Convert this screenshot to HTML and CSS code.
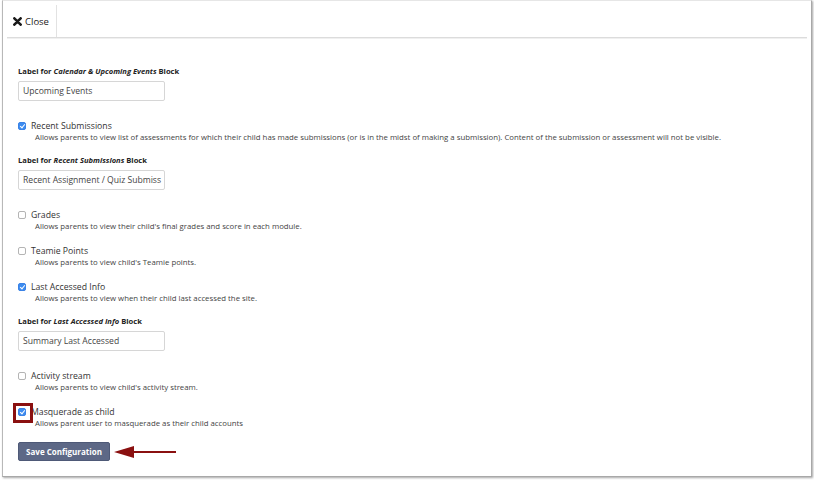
FILE: index.html
```html
<!DOCTYPE html>
<html>
<head>
<meta charset="utf-8">
<link rel="stylesheet" href="styles.css">
</head>
<body>
<div class="frame">
  <div class="panel">
    <div class="header">
      <div class="tab">
        <svg class="x-icon" width="9" height="9" viewBox="0 0 10 10"><path d="M1.5 1.5 L8.5 8.5 M8.5 1.5 L1.5 8.5" stroke="#1a1a1a" stroke-width="2.9" stroke-linecap="round"/></svg>
        <span>Close</span>
      </div>
    </div>
    <div class="content">
      <div class="field field-input">
        <div class="label">Label for <em>Calendar &amp; Upcoming Events</em> Block</div>
        <div class="input">Upcoming Events</div>
      </div>

      <div class="option">
        <div class="opt-title"><span class="cb checked"></span>Recent Submissions</div>
        <div class="desc">Allows parents to view list of assessments for which their child has made submissions (or is in the midst of making a submission). Content of the submission or assessment will not be visible.</div>
      </div>

      <div class="field field-input">
        <div class="label">Label for <em>Recent Submissions</em> Block</div>
        <div class="input">Recent Assignment / Quiz Submiss</div>
      </div>

      <div class="option">
        <div class="opt-title"><span class="cb"></span>Grades</div>
        <div class="desc">Allows parents to view their child's final grades and score in each module.</div>
      </div>

      <div class="option">
        <div class="opt-title"><span class="cb"></span>Teamie Points</div>
        <div class="desc">Allows parents to view child's Teamie points.</div>
      </div>

      <div class="option">
        <div class="opt-title"><span class="cb checked"></span>Last Accessed Info</div>
        <div class="desc">Allows parents to view when their child last accessed the site.</div>
      </div>

      <div class="field field-input">
        <div class="label">Label for <em>Last Accessed Info</em> Block</div>
        <div class="input">Summary Last Accessed</div>
      </div>

      <div class="option">
        <div class="opt-title"><span class="cb"></span>Activity stream</div>
        <div class="desc">Allows parents to view child's activity stream.</div>
      </div>

      <div class="option">
        <div class="opt-title"><span class="cb checked"><span class="highlight"></span></span>Masquerade as child</div>
        <div class="desc">Allows parent user to masquerade as their child accounts</div>
      </div>

      <div class="actions">
        <button class="btn">Save Configuration</button>
        <svg class="arrow" width="64" height="16" viewBox="0 0 64 16"><path d="M62 7 L20 7 L20 2 L0 8 L20 14 L20 9 L62 9 Z" fill="#8a1010"/></svg>
      </div>
    </div>
  </div>
</div>
</body>
</html>
```

FILE: styles.css
```css
* { box-sizing: border-box; }
html, body { margin: 0; padding: 0; background: #fff; }
body {
  font-family: "Open Sans", "Liberation Sans", sans-serif;
  color: #333;
  width: 814px;
  height: 481px;
  overflow: hidden;
}
.frame {
  margin-left: 2px;
  width: 810px;
  height: 477px;
  border-top: 1px solid #e6e6e6;
  border-left: 1px solid #b8b8b8;
  border-right: 1px solid #a8a8a8;
  border-bottom: 1px solid #a8a8a8;
  box-shadow: 1px 1px 2px rgba(0,0,0,0.35);
  padding: 0 4px 0 4px;
}
.panel { height: 100%; }
.header {
  height: 37px;
  border-bottom: 1px solid #dcdcdc;
  box-shadow: 0 1px 0 #f0f0f0;
  display: flex;
  align-items: flex-end;
}
.tab {
  height: 32px;
  width: 50px;
  border-right: 1px solid #e2e2e2;
  display: flex;
  align-items: center;
  padding-left: 6px;
  gap: 3px;
  font-size: 9.5px;
  color: #222;
}
.x-icon { display: block; }
.content {
  padding: 28px 0 0 11px;
  font-size: 7.8px;
}
.field-input { margin-bottom: 19px; }
.option + .field-input { margin-top: -1px; }
.label {
  font-weight: 700;
  font-size: 7.6px;
  line-height: 11px;
  color: #222;
  margin-bottom: 4px;
}
.label em { font-style: italic; }
.input {
  width: 147px;
  height: 20px;
  border: 1px solid #d6d6d6;
  border-radius: 2px;
  font-size: 8.6px;
  line-height: 18px;
  padding-left: 4px;
  color: #444;
  overflow: hidden;
  white-space: nowrap;
}
.option { margin-bottom: 13px; }
.opt-title {
  display: flex;
  align-items: center;
  font-size: 8.7px;
  line-height: 12px;
  color: #333;
}
.cb {
  position: relative;
  width: 8px;
  height: 8px;
  border: 1px solid #b4b4b4;
  border-radius: 2px;
  background: #fff;
  margin-right: 5px;
  flex: none;
}
.cb.checked {
  border-color: #3a82e6;
  background: #3d8cf0;
}
.cb.checked::after {
  content: "";
  position: absolute;
  left: 1.5px;
  top: 0px;
  width: 2px;
  height: 4px;
  border: solid #fff;
  border-width: 0 1.2px 1.2px 0;
  transform: rotate(40deg);
}
.highlight {
  position: absolute;
  left: -6px;
  top: -6px;
  width: 20px;
  height: 20px;
  border: 3px solid #8a1010;
}
.desc {
  font-size: 7.8px;
  line-height: 11px;
  padding-left: 17px;
  color: #444;
  white-space: nowrap;
}
.actions {
  display: flex;
  align-items: center;
  gap: 4px;
}
.btn {
  font-family: "Open Sans", "Liberation Sans", sans-serif;
  font-weight: 700;
  font-size: 8px;
  color: #fff;
  background: #5d6886;
  border: 1px solid #4e5977;
  border-radius: 2px;
  width: 92px;
  height: 19px;
  padding: 0;
  text-align: center;
}
.arrow { display: block; }
```
